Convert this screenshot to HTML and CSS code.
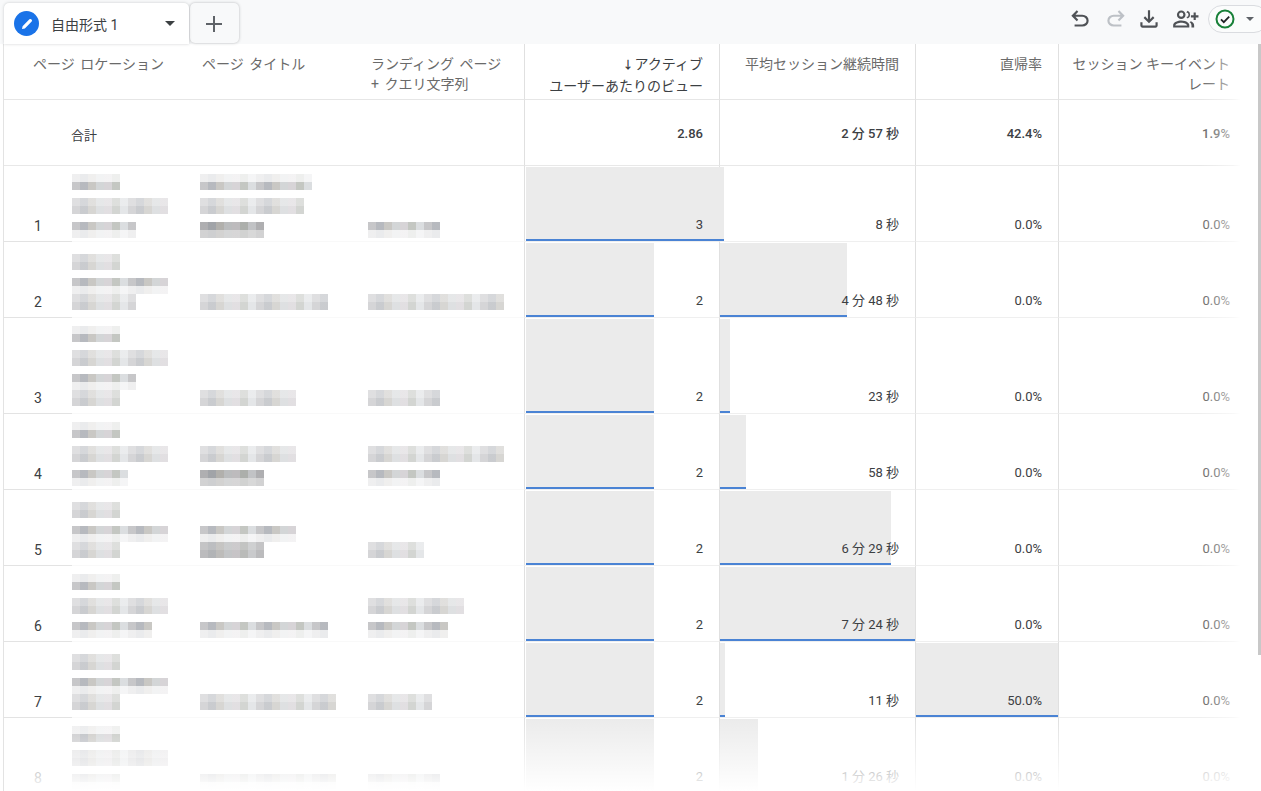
FILE: index.html
```html
<!DOCTYPE html>
<html lang="ja">
<head>
<meta charset="utf-8">
<title>自由形式 1</title>
<link rel="stylesheet" href="styles.css">
</head>
<body>
<div class="page">
  <header class="toolbar">
    <div class="tabs">
      <div class="tab active">
        <span class="tab-badge">
          <svg viewBox="0 0 24 24" width="16" height="16"><path fill="#fff" d="M4.5 19.5l.9-4.3L15.6 5a1.9 1.9 0 0 1 2.7 0l.7.7a1.9 1.9 0 0 1 0 2.7L8.800 18.600z"/></svg>
        </span>
        <span class="tab-name">自由形式 1</span>
        <span class="caret"></span>
      </div>
      <div class="tab add">
        <svg viewBox="0 0 24 24" width="24" height="24"><path fill="#5f6368" d="M11 4h2v7h7v2h-7v7h-2v-7H4v-2h7z"/></svg>
      </div>
    </div>
    <div class="tools">
      <svg class="tool undo" viewBox="0 0 24 24"><path d="M7 19v-2h7.100q1.575 0 2.738-1T18 13.500q0-1.500-1.162-2.500T14.100 10H7.800l2.600 2.600L9 14 4 9l5-5 1.400 1.400L7.800 8h6.300q2.425 0 4.163 1.575T20 13.500q0 2.350-1.737 3.925T14.100 19z"/></svg>
      <svg class="tool off" viewBox="0 0 24 24"><path transform="matrix(-1 0 0 1 24 0)" d="M7 19v-2h7.100q1.575 0 2.738-1T18 13.500q0-1.500-1.162-2.500T14.100 10H7.800l2.600 2.600L9 14 4 9l5-5 1.400 1.400L7.800 8h6.300q2.425 0 4.163 1.575T20 13.500q0 2.350-1.737 3.925T14.100 19z"/></svg>
      <svg class="tool down" viewBox="0 0 24 24"><path d="M12 16l-5-5 1.400-1.450 2.600 2.600V4h2v8.150l2.600-2.600L17 11zm-6 4q-.825 0-1.412-.587T4 18v-3h2v3h12v-3h2v3q0 .825-.587 1.413T18 20z"/></svg>
      <svg class="tool wide" viewBox="0 0 26 24"><path d="M9.500 12a4 4 0 1 1 0-8 4 4 0 0 1 0 8zm0-2a2 2 0 1 0 0-4 2 2 0 0 0 0 4zM2 20v-2.200c0-2.800 4.500-4.300 7.500-4.300 2.200 0 5 .7 6.500 2.100.7.600 1 1.400 1 2.200V20zm2-2h11c0-1.300-3-2.500-5.500-2.500S4 16.700 4 18zM15.500 4.400a4 4 0 0 1 0 7.200c-.4-.5-.8-1-1.300-1.500a2 2 0 0 0 0-4.200c.5-.5.900-1 1.300-1.500zM18.500 14.200c1.800.8 3 2 3 3.800V20h-2.500v-2c0-1.300-.6-2.500-1.800-3zM21 6h2v2.500h2.500v2H23V13h-2v-2.500h-2.500v-2H21z"/></svg>
      <div class="status">
        <svg viewBox="0 0 24 24" width="24" height="24"><circle cx="12" cy="12" r="8.500" fill="none" stroke="#188038" stroke-width="2"/><path d="M8 12.300l2.800 2.800L16.200 9.600" fill="none" stroke="#202124" stroke-width="1.800"/></svg>
        <span class="caret small"></span>
      </div>
    </div>
  </header>

  <main class="report">
    <table class="grid">
      <colgroup>
        <col class="c-idx"><col class="c-loc"><col class="c-title"><col class="c-land">
        <col class="c-m1"><col class="c-m2"><col class="c-m3"><col class="c-m4">
      </colgroup>
      <thead>
        <tr class="head">
          <th class="dim dim-first" colspan="2">ページ ロケーション</th>
          <th class="dim dim-title">ページ タイトル</th>
          <th class="dim dim-land">ランディング ページ<br>+ クエリ文字列</th>
          <th class="metric sorted"><span class="arrow">↓</span>アクティブ<br>ユーザーあたりのビュー</th>
          <th class="metric">平均セッション継続時間</th>
          <th class="metric">直帰率</th>
          <th class="metric last">セッション キーイベント<br>レート</th>
        </tr>
      </thead>
      <tbody>
        <tr class="total">
          <td></td>
          <td colspan="3" class="total-label">合計</td>
          <td class="num">2.86</td>
          <td class="num">2 分 57 秒</td>
          <td class="num">42.4%</td>
          <td class="num last">1.9%</td>
        </tr>

        <tr class="row tight">
          <td class="idx">1</td>
          <td class="mos"><i class="m low w48"></i><i class="m even w96 g8"></i><i class="m high w64 g8"></i></td>
          <td class="mos"><i class="m low w112"></i><i class="m even w104 g8"></i><i class="m high dark w64 g8"></i></td>
          <td class="mos"><i class="m high w72"></i></td>
          <td class="num"><b class="bar over" style="width:198px"></b><span>3</span></td>
          <td class="num"><span>8 秒</span></td>
          <td class="num"><span>0.0%</span></td>
          <td class="num last"><span>0.0%</span></td>
        </tr>
        <tr class="row">
          <td class="idx">2</td>
          <td class="mos"><i class="m even w48"></i><i class="m high w96 g8"></i><i class="m even w64"></i></td>
          <td class="mos"><i class="m even w128"></i></td>
          <td class="mos"><i class="m even w136"></i></td>
          <td class="num"><b class="bar" style="width:128px"></b><span>2</span></td>
          <td class="num"><b class="bar m2" style="width:127px"></b><span>4 分 48 秒</span></td>
          <td class="num"><span>0.0%</span></td>
          <td class="num last"><span>0.0%</span></td>
        </tr>
        <tr class="row tall">
          <td class="idx">3</td>
          <td class="mos"><i class="m low w48"></i><i class="m even w96 g8"></i><i class="m high w64 g8"></i><i class="m even w48"></i></td>
          <td class="mos"><i class="m even w96"></i></td>
          <td class="mos"><i class="m even w72"></i></td>
          <td class="num"><b class="bar" style="width:128px"></b><span>2</span></td>
          <td class="num"><b class="bar m2" style="width:10px"></b><span>23 秒</span></td>
          <td class="num"><span>0.0%</span></td>
          <td class="num last"><span>0.0%</span></td>
        </tr>
        <tr class="row tight">
          <td class="idx">4</td>
          <td class="mos"><i class="m low w48"></i><i class="m even w96 g8"></i><i class="m high w56 g8"></i></td>
          <td class="mos"><i class="m even w96"></i><i class="m high dark w64 g8"></i></td>
          <td class="mos"><i class="m even w136"></i><i class="m high w72 g8"></i></td>
          <td class="num"><b class="bar" style="width:128px"></b><span>2</span></td>
          <td class="num"><b class="bar m2" style="width:26px"></b><span>58 秒</span></td>
          <td class="num"><span>0.0%</span></td>
          <td class="num last"><span>0.0%</span></td>
        </tr>
        <tr class="row">
          <td class="idx">5</td>
          <td class="mos"><i class="m even w48"></i><i class="m high w96 g8"></i><i class="m even w48"></i></td>
          <td class="mos"><i class="m high w96"></i><i class="m even dark w64"></i></td>
          <td class="mos"><i class="m even w56"></i></td>
          <td class="num"><b class="bar" style="width:128px"></b><span>2</span></td>
          <td class="num"><b class="bar m2" style="width:171px"></b><span>6 分 29 秒</span></td>
          <td class="num"><span>0.0%</span></td>
          <td class="num last"><span>0.0%</span></td>
        </tr>
        <tr class="row tight">
          <td class="idx">6</td>
          <td class="mos"><i class="m low w48"></i><i class="m even w96 g8"></i><i class="m high w80 g8"></i></td>
          <td class="mos"><i class="m high w128"></i></td>
          <td class="mos"><i class="m even w96"></i><i class="m high w80 g8"></i></td>
          <td class="num"><b class="bar" style="width:128px"></b><span>2</span></td>
          <td class="num"><b class="bar m2" style="width:195px"></b><span>7 分 24 秒</span></td>
          <td class="num"><span>0.0%</span></td>
          <td class="num last"><span>0.0%</span></td>
        </tr>
        <tr class="row">
          <td class="idx">7</td>
          <td class="mos"><i class="m even w48"></i><i class="m high w96 g8"></i><i class="m even w48"></i></td>
          <td class="mos"><i class="m even w136"></i></td>
          <td class="mos"><i class="m even w64"></i></td>
          <td class="num"><b class="bar" style="width:128px"></b><span>2</span></td>
          <td class="num"><b class="bar m2" style="width:5px"></b><span>11 秒</span></td>
          <td class="num"><b class="bar m2" style="width:142px"></b><span>50.0%</span></td>
          <td class="num last"><span>0.0%</span></td>
        </tr>
        <tr class="row tight">
          <td class="idx">8</td>
          <td class="mos"><i class="m low w48"></i><i class="m even w96 g8"></i><i class="m high w48 g8"></i></td>
          <td class="mos"><i class="m high w136"></i></td>
          <td class="mos"><i class="m high w72"></i></td>
          <td class="num"><b class="bar" style="width:128px"></b><span>2</span></td>
          <td class="num"><b class="bar m2" style="width:38px"></b><span>1 分 26 秒</span></td>
          <td class="num"><span>0.0%</span></td>
          <td class="num last"><span>0.0%</span></td>
        </tr>
      </tbody>
    </table>
    <div class="fade-right"></div>
    <div class="fade-bottom"></div>
    <div class="scroll-thumb"></div>
  </main>
</div>
</body>
</html>
```
FILE: styles.css
```css
* { box-sizing: border-box; }
html, body { margin: 0; height: 100%; }
body {
  background: #fff;
  color: #202124;
  font-family: Roboto, "Noto Sans CJK JP", sans-serif;
  overflow: hidden;
}
.page { display: flex; flex-direction: column; height: 791px; overflow: hidden; }

/* top bar */
.toolbar {
  flex: 0 0 44px;
  display: flex;
  justify-content: space-between;
  background: #f8f9fa;
  padding-left: 4px;
  position: relative;
  z-index: 2;
}
.tabs { display: flex; align-items: flex-start; padding-top: 3px; }
.tab {
  display: flex;
  align-items: center;
}
.tab.active {
  width: 185px;
  height: 41px;
  background: #fff;
  padding: 0 14px 0 10px;
  border-radius: 5px 5px 0 0;
  box-shadow: 0 0 3px rgba(60,64,67,.25);
  position: relative;
}
.tab.add {
  width: 49px;
  height: 40px;
  margin-left: 1px;
  justify-content: center;
  background: #f8f9fa;
  border-radius: 5px;
  box-shadow: 0 0 3px rgba(60,64,67,.35);
  padding: 2px 1px 0 0;
}
.tab-badge {
  width: 25px;
  height: 25px;
  border-radius: 50%;
  background: #1a73e8;
  display: flex;
  align-items: center;
  justify-content: center;
  flex: none;
}
.tab-name { font-size: 14px; margin-left: 12px; flex: 1; color: #3c4043; }
.caret {
  width: 0; height: 0;
  border-left: 5px solid transparent;
  border-right: 5px solid transparent;
  border-top: 5px solid #3c4043;
}
.caret.small { border-left-width: 4px; border-right-width: 4px; border-top-width: 4px; border-top-color: #5f6368; margin-left: 9px; }
.tools { display: flex; align-items: center; padding-bottom: 6px; }
.tool { width: 26px; height: 26px; fill: #4f5256; margin-left: 10px; flex: none; }
.tool.off { fill: #bdc1c6; }
.tool.down { margin-left: 7px; }
.tool.wide { width: 28px; margin-left: 9px; }
.status {
  width: 60px;
  height: 28px;
  margin-left: 9px;
  margin-right: -7px;
  border: 1px solid #dadce0;
  border-radius: 14px;
  display: flex;
  align-items: center;
  padding-left: 4px;
  background: #fbfcfc;
}

/* report table */
.report {
  flex: 1;
  position: relative;
  margin-left: 3px;
  border-left: 1px solid #e3e3e3;
  overflow: hidden;
}
.grid {
  width: 1236px;
  table-layout: fixed;
  border-collapse: separate;
  border-spacing: 0;
}
.c-idx { width: 68px; }
.c-loc { width: 128px; }
.c-title { width: 168px; }
.c-land { width: 157px; }
.c-m1 { width: 195px; }
.c-m2 { width: 196px; }
.c-m3 { width: 143px; }
.c-m4 { width: 181px; }

th {
  font-weight: 400;
  font-size: 14px;
  line-height: 20px;
  color: #6a6a6a;
  vertical-align: top;
  height: 56px;
  padding: 10px 16px 0 0;
  text-align: right;
  border-bottom: 1px solid #e6e6e6;
  white-space: nowrap;
}
th.dim { text-align: left; word-spacing: 2px; }
th.dim-first { padding-left: 29px; }
th.dim-title { padding-left: 2px; }
th.dim-land { padding-left: 3px; border-right: 1px solid #e0e0e0; }
th.metric { border-right: 1px solid #e0e0e0; }
th.sorted { color: #3c4043; }
th.last { border-right: 0; padding-right: 10px; }
.arrow { font-size: 11px; font-weight: 700; margin-right: 1px; }

td {
  padding: 0;
  border-bottom: 1px solid #efefef;
  position: relative;
  font-size: 13px;
}
.total td { height: 66px; border-bottom-color: #e8e8e8; padding-top: 3px; }
.total .total-label { font-size: 13px; color: #3c4043; text-indent: -1px; border-right: 1px solid #e0e0e0; }
.total .num { font-weight: 500; vertical-align: middle; }

.row td { height: 76px; vertical-align: bottom; }
.row.tall td { height: 96px; }

.num {
  text-align: right;
  padding-right: 16px;
  border-right: 1px solid #e0e0e0;
  color: #3c4043;
  line-height: 16px;
}
.num.last { border-right: 0; padding-right: 10px; color: #666; }
.row .num { padding-bottom: 8px; }
.num span { position: relative; }

.idx {
  font-size: 14px;
  line-height: 16px;
  text-align: center;
  color: #3c4043;
  padding: 0 0 7px 0;
  border-bottom-color: #e3e3e3 !important;
}
.row .idx { padding-bottom: 7px; }
.row .idx { text-align: left; padding-left: 30px; }

.mos { border-bottom-color: #f9f9f9 !important; padding-bottom: 7px; }
.row.tight .mos { padding-bottom: 3px; }
.row .mos:nth-child(4) { border-right: 1px solid #e0e0e0; }

.m {
  display: block;
  height: 16px;
  background-image:
    linear-gradient(var(--top) 0 8px, var(--bot) 8px 16px),
    repeating-linear-gradient(90deg, #bfbfc2 0 8px, #adb0b6 8px 16px, #c2c0bc 16px 24px, #cdd0d2 24px 32px, #d2ced2 32px 40px, #bcbfba 40px 48px, #d6d9dc 48px 56px);
}
.low { --top: rgba(255,255,255,.75); --bot: rgba(255,255,255,.12); }
.high { --top: rgba(255,255,255,.12); --bot: rgba(255,255,255,.75); }
.even { --top: rgba(255,255,255,.5); --bot: rgba(255,255,255,.35); }
.dark { filter: brightness(.88); }
.g8 { margin-top: 8px; }
.w48 { width: 48px; }
.w56 { width: 56px; }
.w64 { width: 64px; }
.w72 { width: 72px; }
.w80 { width: 80px; }
.w96 { width: 96px; }
.w104 { width: 104px; }
.w112 { width: 112px; }
.w128 { width: 128px; }
.w136 { width: 136px; }

/* in-cell data bars */
.bar {
  position: absolute;
  left: 1px;
  top: 1px;
  bottom: 0;
  background: #ebebeb;
  border-bottom: 2px solid #4a83d4;
}
.bar.m2 { left: 0; }
.bar.over { z-index: 1; }
.bar.over + span { z-index: 2; }

/* overlays */
.fade-right {
  position: absolute;
  top: 0;
  bottom: 0;
  left: 1196px;
  width: 41px;
  background: linear-gradient(90deg, rgba(255,255,255,0) 0, rgba(255,255,255,.35) 55%, rgba(255,255,255,.55) 80%, #fff 100%);
  pointer-events: none;
}
.fade-right::after {
  content: "";
  position: absolute;
  left: 100%;
  top: 0;
  bottom: 0;
  width: 18px;
  background: #fff;
}
.fade-bottom {
  position: absolute;
  left: 0;
  right: 0;
  top: 674px;
  height: 73px;
  background: linear-gradient(rgba(255,255,255,0), #fff);
  pointer-events: none;
}
.scroll-thumb {
  position: absolute;
  right: 0;
  top: 0;
  width: 3px;
  height: 611px;
  background: #c8c8c8;
}
```
